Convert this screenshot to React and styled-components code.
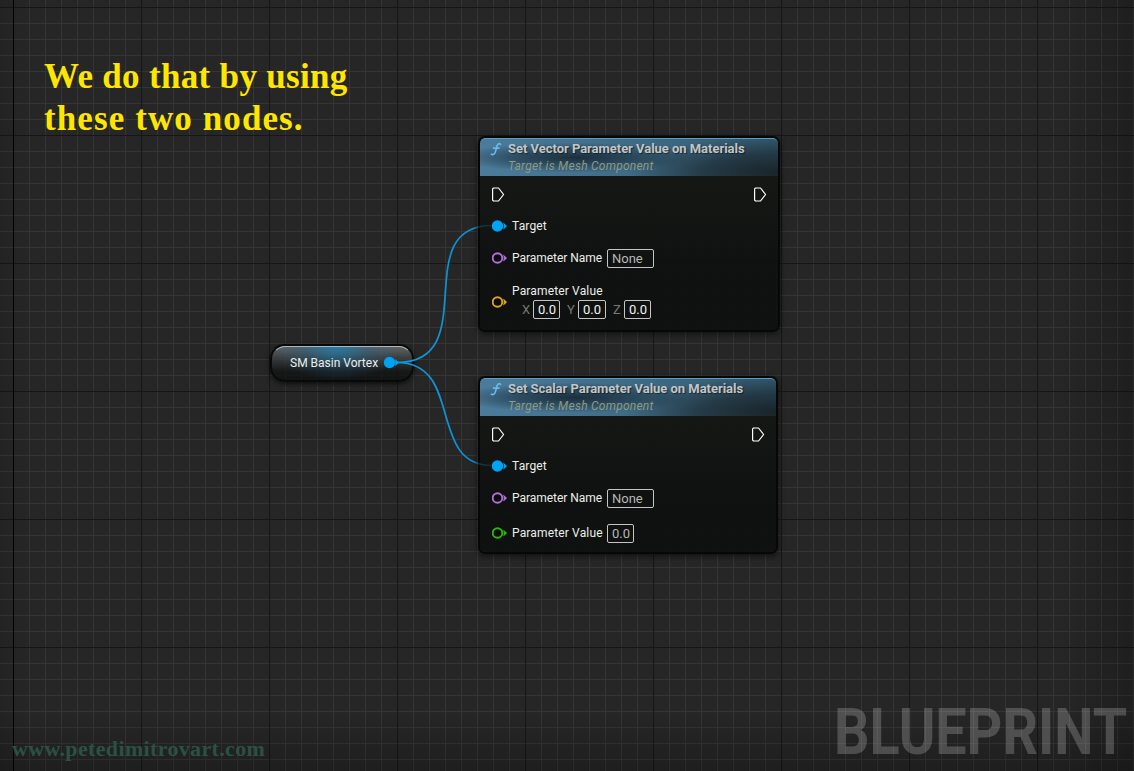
import React from "react";
import styled, { createGlobalStyle } from "styled-components";

const GlobalStyle = createGlobalStyle`
  html, body { margin: 0; padding: 0; background: #262626; overflow: hidden; }
  *, *::before, *::after { box-sizing: border-box; }
`;

const Canvas = styled.main`
  position: relative;
  width: 1134px;
  height: 771px;
  overflow: hidden;
  font-family: Roboto, "Liberation Sans", sans-serif;
  background-color: #262626;
  background-image:
    linear-gradient(90deg, #000 1px, transparent 1px),
    linear-gradient(90deg, #161616 1px, transparent 1px),
    linear-gradient(#161616 1px, transparent 1px),
    linear-gradient(90deg, #353535 1px, transparent 1px),
    linear-gradient(#353535 1px, transparent 1px);
  background-size: 1200px 100%, 128px 128px, 128px 128px, 16px 16px, 16px 16px;
  background-position: 13px 0, 13px 7px, 13px 7px, 13px 7px, 13px 7px;
  background-repeat: no-repeat, repeat, repeat, repeat, repeat;
`;

const Vignette = styled.div`
  position: absolute;
  inset: 0;
  pointer-events: none;
  background:
    linear-gradient(270deg, rgba(0, 0, 0, 0.2), transparent 75px),
    linear-gradient(0deg, rgba(0, 0, 0, 0.2), transparent 60px),
    linear-gradient(90deg, rgba(0, 0, 0, 0.08), transparent 30px);
`;

const Caption = styled.h1`
  position: absolute;
  left: 44px;
  top: 56px;
  margin: 0;
  display: flex;
  flex-direction: column;
  font: 700 35px/42px "Liberation Serif", serif;
  color: #ffe600;
  white-space: nowrap;
`;

const CaptionLine = styled.span`
  letter-spacing: ${(p) => p.$spacing}px;
`;

const SiteMark = styled.div`
  position: absolute;
  left: 12px;
  top: 736px;
  font: 700 22px/26px "Liberation Serif", serif;
  letter-spacing: 0.35px;
  color: #2a5144;
  white-space: nowrap;
`;

const GraphMark = styled.div`
  position: absolute;
  left: 834px;
  top: 698px;
  font-size: 64px;
  line-height: 70px;
  font-weight: 700;
  color: rgba(255, 255, 255, 0.2);
  white-space: nowrap;
  transform-origin: 0 50%;
  transform: scaleX(0.869);
`;

const Wires = styled.svg`
  position: absolute;
  inset: 0;
  pointer-events: none;
`;

const VariableNode = styled.section`
  position: absolute;
  left: 270px;
  top: 344px;
  width: 144px;
  height: 38px;
  padding: 0 15px 0 18px;
  display: flex;
  align-items: center;
  border: 2px solid #080909;
  border-radius: 15px;
  background:
    radial-gradient(ellipse 62px 34px at 46% 0, rgba(32, 126, 174, 0.85), rgba(32, 100, 138, 0.35) 55%, transparent),
    linear-gradient(rgba(110, 114, 116, 0.85), rgba(50, 54, 56, 0.75) 45%, rgba(18, 20, 20, 0.8) 75%, rgba(15, 17, 17, 0.85));
  box-shadow: 0 2px 5px rgba(0, 0, 0, 0.65);
  &::before {
    content: "";
    position: absolute;
    inset: 0;
    border-radius: 13px;
    border: 1px solid transparent;
    border-top-color: rgba(205, 210, 212, 0.75);
    pointer-events: none;
  }
`;

const Node = styled.section`
  position: absolute;
  left: 478px;
  top: ${(p) => p.$top}px;
  width: ${(p) => p.$width}px;
  height: ${(p) => p.$height}px;
  border: 2px solid #060707;
  border-radius: 7px;
  background: linear-gradient(rgba(22, 25, 22, 0.93), rgba(13, 16, 14, 0.94) 70%);
  background-clip: padding-box;
  box-shadow: 0 2px 6px rgba(0, 0, 0, 0.6);
  overflow: hidden;
`;

const Header = styled.header`
  height: 38px;
  padding: 1px 0 0 8px;
  display: flex;
  gap: 6px;
  border-radius: 5px 5px 0 0;
  border-top: 1px solid #5b9cc4;
  background:
    radial-gradient(ellipse 120px 15px at 32% 50%, rgba(24, 42, 55, 0.92), rgba(28, 50, 65, 0.6) 50%, transparent),
    radial-gradient(ellipse 150px 36px at 100% 90%, rgba(24, 34, 38, 0.95), rgba(28, 42, 50, 0.7) 50%, transparent),
    linear-gradient(90deg, #4b7c9b, #43708c 35%, #3a637b 75%, #335970);
`;

const Titles = styled.div`
  display: flex;
  flex-direction: column;
  white-space: nowrap;
`;

const Title = styled.span`
  font-size: 13px;
  line-height: 17px;
  font-weight: 700;
  color: #c3c5c6;
  letter-spacing: -0.03px;
  text-shadow: 1px 1px 1px rgba(0, 0, 0, 0.5);
`;

const Subtitle = styled.span`
  font-size: 12px;
  line-height: 18px;
  font-style: italic;
  color: #8b9b84;
  letter-spacing: 0.24px;
`;

const Row = styled.div`
  height: ${(p) => p.$height}px;
  padding: 0 12px;
  display: flex;
  align-items: center;
`;

const ExecRow = styled(Row)`
  padding-right: 11px;
  padding-bottom: 1px;
  justify-content: space-between;
`;

const Rows = styled.div`
  padding-top: 4px;
`;

const PinSvg = styled.svg`
  display: block;
  flex: none;
`;

const Label = styled.span`
  font-size: 12px;
  line-height: 16px;
  color: #eceeec;
  letter-spacing: ${(p) => p.$spacing ?? 0.15}px;
  white-space: nowrap;
`;

const PinLabel = styled(Label)`
  width: ${(p) => (p.$width ? `${p.$width}px` : "auto")};
  margin-left: 5px;
`;

const Field = styled.span`
  width: ${(p) => p.$width}px;
  height: 19px;
  padding-left: 4px;
  border: 1px solid #c3c6c3;
  border-radius: 2px;
  font-size: 13px;
  line-height: 18px;
  color: ${(p) => (p.$bright ? "#f2f4f2" : "#b5b8b5")};
  white-space: nowrap;
`;

const VectorValue = styled.div`
  margin-left: 5px;
  padding-bottom: 2px;
  display: flex;
  flex-direction: column;
  gap: 1px;
`;

const Axes = styled.div`
  display: flex;
  align-items: center;
  padding-left: 10px;
`;

const Axis = styled.span`
  width: ${(p) => p.$width}px;
  padding-left: ${(p) => p.$indent || 0}px;
  font-size: 13px;
  line-height: 18px;
  color: #747774;
`;

const ExecPin = () => (
  <PinSvg width="13" height="15" viewBox="0 0 13 15">
    <path d="M1.5 1H6.5L11.6 7.5L6.5 14H1.5L.6 13.1V1.9Z" fill="none" stroke="#fff" strokeWidth="1.2" strokeLinejoin="round" />
  </PinSvg>
);

const Pin = ({ color, filled }) => (
  <PinSvg width="15" height="12" viewBox="0 0 15 12">
    <circle cx="5.5" cy="6" r="4.8" fill={filled ? color : "#0b0d0b"} stroke={color} strokeWidth="1.9" />
    <path d="M11.2 2.5Q13.2 4 15 6Q13.2 8 11.2 9.5Q12.4 6 11.2 2.5Z" fill={color} />
  </PinSvg>
);

const FunctionIcon = () => (
  <PinSvg width="14" height="18" viewBox="0 0 14 18">
    <path d="M12.6 4.5C11.9 3.1 9.7 3.4 9.1 5.7L7.3 12.1C6.7 14.3 4.7 15.2 3.2 14.1M5.5 8.1H11" fill="none" stroke="#69b9eb" strokeWidth="1.6" strokeLinecap="round" />
  </PinSvg>
);

const FunctionNode = ({ title, top, width, height, children }) => (
  <Node $top={top} $width={width} $height={height}>
    <Header>
      <FunctionIcon />
      <Titles>
        <Title>{title}</Title>
        <Subtitle>Target is Mesh Component</Subtitle>
      </Titles>
    </Header>
    <Rows>
      <ExecRow $height={30}><ExecPin /><ExecPin /></ExecRow>
      <Row $height={31}><Pin color="#00a2f2" filled /><PinLabel>Target</PinLabel></Row>
      <Row $height={34}>
        <Pin color="#b66be0" />
        <PinLabel $width={95} $spacing={-0.03}>Parameter Name</PinLabel>
        <Field $width={47}>None</Field>
      </Row>
      {children}
    </Rows>
  </Node>
);

export default function App() {
  return (
    <Canvas>
      <GlobalStyle />
      <Vignette />
      <Caption>
        <CaptionLine $spacing={0.32}>We do that by using</CaptionLine>
        <CaptionLine $spacing={1.1}>these two nodes.</CaptionLine>
      </Caption>
      <SiteMark>www.petedimitrovart.com</SiteMark>
      <GraphMark>BLUEPRINT</GraphMark>
      <VariableNode>
        <Label $spacing={0}>SM Basin Vortex</Label>
      </VariableNode>
      <FunctionNode title="Set Vector Parameter Value on Materials" top={136} width={302} height={196}>
        <Row $height={54}>
          <Pin color="#dba51f" />
          <VectorValue>
            <Label>Parameter Value</Label>
            <Axes>
              <Axis $width={11}>X</Axis><Field $width={27} $bright>0.0</Field>
              <Axis $width={18} $indent={7}>Y</Axis><Field $width={28} $bright>0.0</Field>
              <Axis $width={18} $indent={7}>Z</Axis><Field $width={27} $bright>0.0</Field>
            </Axes>
          </VectorValue>
        </Row>
      </FunctionNode>
      <FunctionNode title="Set Scalar Parameter Value on Materials" top={376} width={300} height={178}>
        <Row $height={36}>
          <Pin color="#2cb80d" />
          <PinLabel $width={95}>Parameter Value</PinLabel>
          <Field $width={27}>0.0</Field>
        </Row>
      </FunctionNode>
      <Wires width="1134" height="771">
        <defs>
          <linearGradient id="wireFade" gradientUnits="userSpaceOnUse" x1="390" y1="0" x2="492" y2="0">
            <stop offset="0" stopColor="#0e9ade" />
            <stop offset="0.82" stopColor="#0e8fd0" />
            <stop offset="0.87" stopColor="#0e8fd0" stopOpacity="0.3" />
            <stop offset="1" stopColor="#0e8fd0" stopOpacity="0.2" />
          </linearGradient>
        </defs>
        <g fill="none" stroke="url(#wireFade)" strokeWidth="1.7">
          <path d="M397 362.5C484 362.5 407 225.5 492 225.5" />
          <path d="M397 362.5C464 362.5 427 465.5 492 465.5" />
        </g>
        <circle cx="389.5" cy="362.5" r="5.7" fill="#00a2f2" />
        <path d="M395.2 359Q397.2 360.5 399 362.5Q397.2 364.5 395.2 366Z" fill="#00a2f2" />
      </Wires>
    </Canvas>
  );
}
